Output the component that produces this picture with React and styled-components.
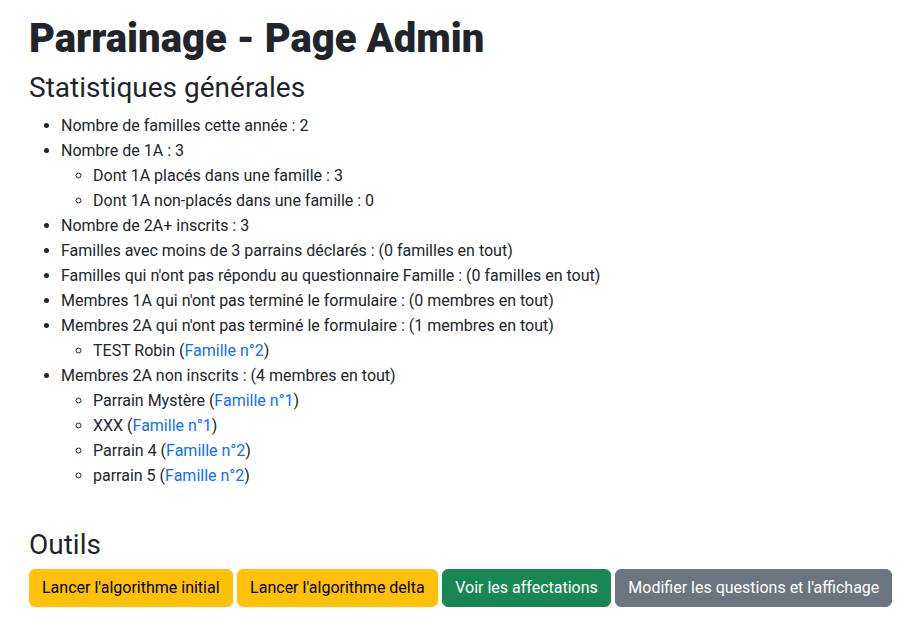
import React from "react";
import styled, { createGlobalStyle } from "styled-components";

const Global = createGlobalStyle`
  html, body { margin: 0; padding: 0; background: #fff; }
  body {
    font-family: Roboto, "Liberation Sans", sans-serif;
    font-size: 16px;
    line-height: 1.5;
    color: #212529;
  }
`;

const Page = styled.div`
  padding: 15px 29px 0 29px;
`;

const Title = styled.h1`
  margin: 0 0 8px 0;
  font-size: 40px;
  font-weight: 900;
  line-height: 1.2;
`;

const Section = styled.h2`
  margin: ${(p) => (p.$top ? "40px" : "0")} 0 8px 0;
  font-size: 28px;
  font-weight: 400;
  line-height: 1.2;
`;

const List = styled.ul`
  margin: 0;
  padding-left: 32px;
  list-style: ${(p) => (p.$nested ? "circle" : "disc")};
`;

const Item = styled.li`
  line-height: 25px;
`;

const Link = styled.a`
  color: #0d6efd;
  text-decoration: none;
`;

const Toolbar = styled.div`
  display: flex;
  gap: 4.5px;
  margin-top: 8px;
`;

const Button = styled.button`
  flex: none;
  white-space: nowrap;
  font-family: inherit;
  font-size: 16px;
  line-height: 24px;
  padding: 6px 12px;
  border: 1px solid ${(p) => p.$bg};
  border-radius: 6px;
  background: ${(p) => p.$bg};
  color: ${(p) => p.$fg};
  cursor: pointer;
`;

const buttons = [
  { label: "Lancer l'algorithme initial", bg: "#ffc107", fg: "#000" },
  { label: "Lancer l'algorithme delta", bg: "#ffc107", fg: "#000" },
  { label: "Voir les affectations", bg: "#198754", fg: "#fff" },
  { label: "Modifier les questions et l'affichage", bg: "#6c757d", fg: "#fff" },
];

export default function App() {
  return (
    <Page>
      <Global />
      <Title>Parrainage - Page Admin</Title>
      <Section>Statistiques générales</Section>
      <List>
        <Item>Nombre de familles cette année : 2</Item>
        <Item>
          Nombre de 1A : 3
          <List $nested>
            <Item>Dont 1A placés dans une famille : 3</Item>
            <Item>Dont 1A non-placés dans une famille : 0</Item>
          </List>
        </Item>
        <Item>Nombre de 2A+ inscrits : 3</Item>
        <Item>Familles avec moins de 3 parrains déclarés : (0 familles en tout)</Item>
        <Item>Familles qui n'ont pas répondu au questionnaire Famille : (0 familles en tout)</Item>
        <Item>Membres 1A qui n'ont pas terminé le formulaire : (0 membres en tout)</Item>
        <Item>
          Membres 2A qui n'ont pas terminé le formulaire : (1 membres en tout)
          <List $nested>
            <Item>TEST Robin (<Link href="#">Famille n°2</Link>)</Item>
          </List>
        </Item>
        <Item>
          Membres 2A non inscrits : (4 membres en tout)
          <List $nested>
            <Item>Parrain Mystère (<Link href="#">Famille n°1</Link>)</Item>
            <Item>XXX (<Link href="#">Famille n°1</Link>)</Item>
            <Item>Parrain 4 (<Link href="#">Famille n°2</Link>)</Item>
            <Item>parrain 5 (<Link href="#">Famille n°2</Link>)</Item>
          </List>
        </Item>
      </List>
      <Section $top>Outils</Section>
      <Toolbar>
        {buttons.map((b) => (
          <Button key={b.label} $bg={b.bg} $fg={b.fg}>{b.label}</Button>
        ))}
      </Toolbar>
    </Page>
  );
}
